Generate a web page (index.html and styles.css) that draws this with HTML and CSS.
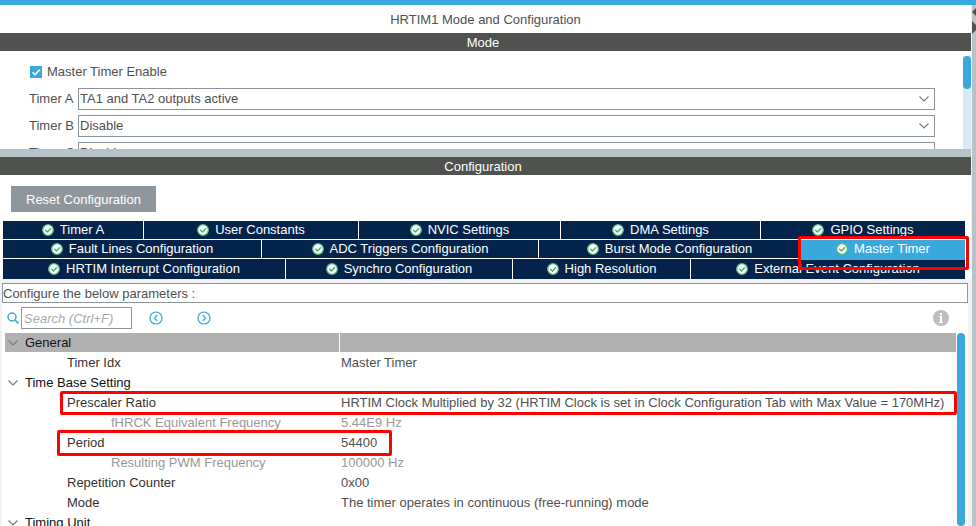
FILE: index.html
```
<!DOCTYPE html>
<html lang="en">
<head>
  <meta charset="UTF-8" />
  <meta name="viewport" content="width=device-width, initial-scale=1.0"/>
  <title>HRTIM1 Mode and Configuration</title>
  <link rel="stylesheet" href="styles.css">
</head>
<body>
  <!-- shared icons -->
  <svg class="defs" aria-hidden="true">
    <symbol id="ok" viewBox="0 0 12 12">
      <circle cx="6" cy="6" r="5.300" fill="#fff" stroke="#5dba80" stroke-width="1.300"/>
      <path d="M3.200 5.800l2.200 2.200L9 4.200" fill="none" stroke="#3fae6b" stroke-width="1.300"/>
    </symbol>
    <symbol id="chevron" viewBox="0 0 10 6">
      <path d="M0.500 0.500L5 5l4.500-4.500" fill="none" stroke="#777" stroke-width="1.100"/>
    </symbol>
  </svg>

  <div class="panel">
    <h1 class="title">HRTIM1 Mode and Configuration</h1>

    <h2 class="bar">Mode</h2>
    <section class="mode">
      <form class="mode-form">
        <div class="check">
          <span class="check-box">
            <input type="checkbox" id="master" checked>
            <svg viewBox="0 0 12 12"><path d="M2.500 6.200l2.500 2.500 4.700-5" fill="none" stroke="#fff" stroke-width="1.500"/></svg>
          </span>
          <label for="master">Master Timer Enable</label>
        </div>
        <div class="field">
          <label for="timer-a">Timer A</label>
          <span class="select">
            <select id="timer-a"><option>TA1 and TA2 outputs active</option><option>Disable</option></select>
            <svg><use href="#chevron"/></svg>
          </span>
        </div>
        <div class="field">
          <label for="timer-b">Timer B</label>
          <span class="select">
            <select id="timer-b"><option>Disable</option></select>
            <svg><use href="#chevron"/></svg>
          </span>
        </div>
        <div class="field">
          <label for="timer-c">Timer C</label>
          <span class="select">
            <select id="timer-c"><option>Disable</option></select>
            <svg><use href="#chevron"/></svg>
          </span>
        </div>
      </form>
      <div class="scroll"><div class="thumb thumb-mode"></div></div>
    </section>

    <div class="splitter"></div>

    <h2 class="bar">Configuration</h2>
    <section class="config">
      <button class="reset">Reset Configuration</button>

      <div class="tabs">
        <div class="tab-row row-1">
          <button class="tab"><svg><use href="#ok"/></svg>Timer A</button>
          <button class="tab"><svg><use href="#ok"/></svg>User Constants</button>
          <button class="tab"><svg><use href="#ok"/></svg>NVIC Settings</button>
          <button class="tab"><svg><use href="#ok"/></svg>DMA Settings</button>
          <button class="tab"><svg><use href="#ok"/></svg>GPIO Settings</button>
        </div>
        <div class="tab-row row-2">
          <button class="tab"><svg><use href="#ok"/></svg>Fault Lines Configuration</button>
          <button class="tab"><svg><use href="#ok"/></svg>ADC Triggers Configuration</button>
          <button class="tab"><svg><use href="#ok"/></svg>Burst Mode Configuration</button>
          <div class="marked">
            <button class="tab active"><svg><use href="#ok"/></svg>Master Timer</button>
            <span class="mark mark-tab"></span>
          </div>
        </div>
        <div class="tab-row row-3">
          <button class="tab"><svg><use href="#ok"/></svg>HRTIM Interrupt Configuration</button>
          <button class="tab"><svg><use href="#ok"/></svg>Synchro Configuration</button>
          <button class="tab"><svg><use href="#ok"/></svg>High Resolution</button>
          <button class="tab"><svg><use href="#ok"/></svg>External Event Configuration</button>
        </div>
      </div>

      <div class="params">
        <p class="hint">Configure the below parameters :</p>

        <div class="tools">
          <label for="search" aria-label="Search">
            <svg class="lens" viewBox="0 0 12 12"><circle cx="5" cy="5" r="4" fill="none" stroke="#39a9dc" stroke-width="1.500"/><path d="M8 8l3.500 3.500" stroke="#39a9dc" stroke-width="1.700"/></svg>
          </label>
          <input class="search" id="search" type="text" placeholder="Search (Ctrl+F)">
          <button class="nav" aria-label="Previous">
            <svg viewBox="0 0 14 14"><circle cx="7" cy="7" r="6"/><path d="M8.300 4L5.500 7l2.800 3"/></svg>
          </button>
          <button class="nav" aria-label="Next">
            <svg viewBox="0 0 14 14"><circle cx="7" cy="7" r="6"/><path d="M5.700 4l2.800 3-2.800 3"/></svg>
          </button>
          <button class="info" aria-label="Information">
            <svg viewBox="0 0 16 16"><circle cx="8" cy="8" r="8" fill="#bdbdbd"/><path d="M7 3h2v2H7zM6 6h3v6h1v1H6v-1h1V7H6z" fill="#fff"/></svg>
          </button>
        </div>

        <div class="tree">
          <table>
            <colgroup><col class="col-name"><col></colgroup>
            <tbody>
              <tr class="group selected"><th><svg><use href="#chevron"/></svg>General</th><td></td></tr>
              <tr><th>Timer Idx</th><td>Master Timer</td></tr>
              <tr class="group"><th><svg><use href="#chevron"/></svg>Time Base Setting</th><td></td></tr>
              <tr class="marked"><th>Prescaler Ratio<span class="mark mark-prescaler"></span></th><td>HRTIM Clock Multiplied by 32 (HRTIM Clock is set in Clock Configuration Tab with Max Value = 170MHz)</td></tr>
              <tr class="sub"><th>fHRCK Equivalent Frequency</th><td>5.44E9 Hz</td></tr>
              <tr class="marked"><th>Period<span class="mark mark-period"></span></th><td>54400</td></tr>
              <tr class="sub"><th>Resulting PWM Frequency</th><td>100000 Hz</td></tr>
              <tr><th>Repetition Counter</th><td>0x00</td></tr>
              <tr><th>Mode</th><td>The timer operates in continuous (free-running) mode</td></tr>
              <tr class="group"><th><svg><use href="#chevron"/></svg>Timing Unit</th><td></td></tr>
            </tbody>
          </table>
          <div class="thumb thumb-tree"></div>
        </div>
      </div>
    </section>
  </div>

  <aside class="divider">
    <svg viewBox="0 0 4 36"><path d="M4 3v8L0 7zM0 16l4 4v5l-4 4z" fill="#505250"/></svg>
  </aside>
</body>
</html>
```
FILE: styles.css
```
* {
  box-sizing: border-box;
}

body {
  margin: 0;
  height: 100vh;
  overflow: hidden;
  display: flex;
  border-top: 5px solid #39a9dc;
  background: #fff;
  font-family: "Liberation Sans", Arial, sans-serif;
  font-size: 13px;
  line-height: 18px;
  color: #505050;
}

button, input, select {
  font: inherit;
  color: inherit;
  margin: 0;
  padding: 0;
  border: none;
  border-radius: 0;
  background: none;
}

svg {
  display: block;
  flex: none;
}

.defs {
  position: absolute;
  width: 0;
  height: 0;
}

.panel {
  flex: 1;
  min-width: 0;
  display: flex;
  flex-direction: column;
}

.divider {
  width: 5px;
  background: #b7c2c9;
  border-left: 1px solid #f2f2f2;
}

.divider svg {
  width: 4px;
  height: 36px;
}

.title {
  margin: 0;
  padding: 6px 0 4px;
  font-size: 13px;
  font-weight: normal;
  text-align: center;
}

.bar {
  margin: 0;
  height: 18px;
  flex: none;
  background: #505250;
  color: #fff;
  font-size: 13px;
  font-weight: normal;
  line-height: 20px;
  text-align: center;
  padding-right: 5px;
}

/* mode */
.mode {
  height: 98px;
  flex: none;
  display: flex;
  overflow: hidden;
}

.mode-form {
  flex: 1;
  padding: 12px 28px 0 29px;
}

.check {
  display: flex;
  align-items: center;
  gap: 5px;
  padding-left: 1px;
  margin-bottom: 7px;
}

.check-box {
  position: relative;
  width: 12px;
  height: 12px;
}

.check-box input {
  display: block;
  appearance: none;
  width: 12px;
  height: 12px;
  background: #39a9dc;
}

.check-box svg {
  position: absolute;
  inset: 0;
  pointer-events: none;
}

.field {
  display: flex;
  align-items: center;
  margin-bottom: 5px;
}

.field label {
  width: 49px;
}

.select {
  flex: 1;
  position: relative;
}

.select select {
  display: block;
  appearance: none;
  width: 100%;
  height: 22px;
  padding-left: 1px;
  border: 1px solid #8d959c;
  background: #fff;
}

.select svg {
  position: absolute;
  right: 6px;
  top: 8px;
  width: 10px;
  height: 6px;
  pointer-events: none;
}

.scroll {
  width: 8px;
  margin-top: 5px;
  background: #dae9f6;
}

.thumb {
  width: 8px;
  border-radius: 4px;
  background: #39a9dc;
}

.thumb-mode {
  height: 33px;
}

.splitter {
  height: 8px;
  flex: none;
  background: #b7c2c9;
}

/* configuration */
.config {
  flex: 1;
  min-height: 0;
  display: flex;
  flex-direction: column;
}

.reset {
  align-self: flex-start;
  height: 26px;
  margin: 11px 0 9px 11px;
  padding: 1px 15px 0;
  background: #8f979d;
  color: #fff;
  flex: none;
}

.tabs {
  display: grid;
  gap: 1px;
  margin: 0 6px 0 3px;
}

.tab-row {
  display: grid;
  gap: 1px;
}

.row-1 {
  grid-template-columns: 140fr 214fr 201fr 199fr 204fr;
}

.row-2 {
  grid-template-columns: 258fr 276fr 261fr 164fr;
}

.row-3 {
  grid-template-columns: 282fr 226fr 177fr 274fr;
}

.tab {
  width: 100%;
  height: 18px;
  display: flex;
  align-items: center;
  justify-content: center;
  gap: 6px;
  background: #03234b;
  color: #fff;
  white-space: nowrap;
}

.row-3 .tab {
  height: 20px;
  padding-bottom: 1px;
}

.tab svg {
  width: 12px;
  height: 12px;
}

.tab.active {
  height: 20px;
  margin-bottom: -2px;
  padding-bottom: 2px;
  background: #39a9dc;
}

/* red frames over the settings to change */
.marked {
  position: relative;
}

.mark {
  position: absolute;
  border: 3px solid #f00;
  border-radius: 2px;
  pointer-events: none;
  z-index: 1;
}

.mark-tab {
  inset: -4px -4px -12px -3px;
}

.mark-prescaler {
  inset: -2px -1px -2px 55px;
}

.mark-period {
  left: 52px;
  top: -3px;
  width: 335px;
  height: 26px;
}

/* parameters */
.params {
  flex: 1;
  min-height: 0;
  display: flex;
  flex-direction: column;
  border: solid #f2f2f2;
  border-width: 4px 3px 0 2px;
}

.hint {
  margin: 0;
  height: 20px;
  flex: none;
  line-height: 20px;
  border: 1px solid #8d959c;
}

.tools {
  display: flex;
  align-items: center;
  height: 30px;
  flex: none;
  padding: 0 19px 0 5px;
}

.lens {
  width: 12px;
  height: 12px;
}

.search {
  width: 111px;
  height: 22px;
  margin: 0 17px 0 2px;
  padding: 0 2px;
  border: 1px solid #8d959c;
}

.search::placeholder {
  color: #aaa;
  font-style: italic;
  opacity: 1;
}

.nav {
  margin-right: 34px;
}

.nav svg {
  width: 14px;
  height: 14px;
  fill: none;
  stroke: #39a9dc;
  stroke-width: 1.2;
}

.info {
  margin-left: auto;
}

.info svg {
  width: 16px;
  height: 16px;
}

.tree {
  flex: 1;
  min-height: 0;
  display: flex;
  gap: 1px;
  padding: 0 3px;
  overflow: hidden;
}

table {
  flex: 1;
  align-self: flex-start;
  table-layout: fixed;
  border-spacing: 0;
}

.col-name {
  width: 335px;
}

tr {
  height: 20px;
}

th, td {
  padding: 0;
  font-weight: normal;
  text-align: left;
  white-space: nowrap;
}

th {
  padding-left: 62px;
  color: #333;
}

td {
  padding-left: 1px;
}

.group th {
  padding-left: 20px;
  color: #111;
}

.group svg {
  float: left;
  width: 10px;
  height: 6px;
  margin: 6px 0 0 -17px;
}

.selected th, .selected td {
  background: #b1b1b1;
  border-bottom: 1px solid #fff;
}

.selected th {
  border-right: 1px solid #fff;
}

.sub th {
  padding-left: 106px;
}

.sub th, .sub td {
  color: #999;
}

.thumb-tree {
  height: 100%;
}
```
